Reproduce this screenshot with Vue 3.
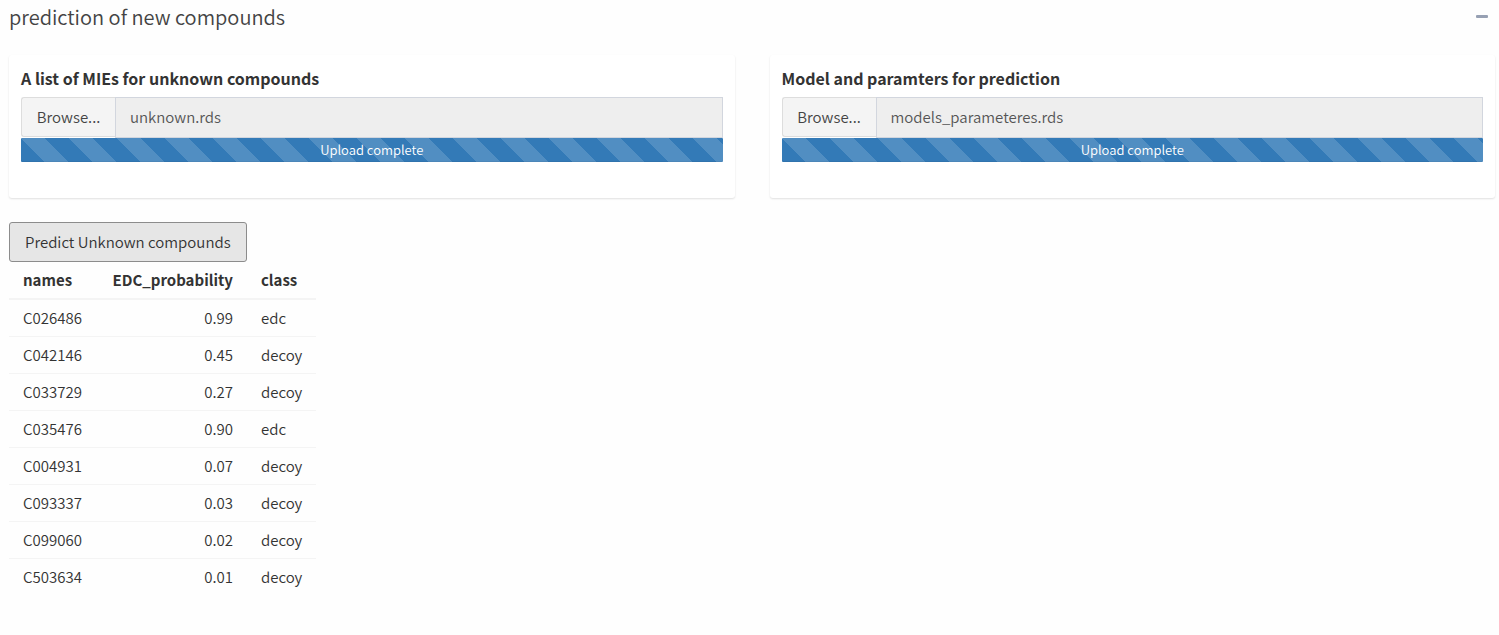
<script setup>
import { ref } from 'vue'

const open = ref(true)

const uploads = [
  { id: 'mies', label: 'A list of MIEs for unknown compounds', file: 'unknown.rds' },
  { id: 'model', label: 'Model and paramters for prediction', file: 'models_parameteres.rds' },
]

const rows = [
  { name: 'C026486', probability: '0.99', group: 'edc' },
  { name: 'C042146', probability: '0.45', group: 'decoy' },
  { name: 'C033729', probability: '0.27', group: 'decoy' },
  { name: 'C035476', probability: '0.90', group: 'edc' },
  { name: 'C004931', probability: '0.07', group: 'decoy' },
  { name: 'C093337', probability: '0.03', group: 'decoy' },
  { name: 'C099060', probability: '0.02', group: 'decoy' },
  { name: 'C503634', probability: '0.01', group: 'decoy' },
]
</script>

<template>
  <main class="box">
    <header class="box-header">
      <h3 class="box-title">prediction of new compounds</h3>
      <button class="collapse" type="button" aria-label="Collapse" :aria-expanded="open" @click="open = !open">
        <svg viewBox="0 0 12 3" width="12" height="3" aria-hidden="true">
          <rect width="12" height="3" rx="1" fill="#97a0b3" />
        </svg>
      </button>
    </header>

    <div v-if="open" class="box-body">
      <div class="uploads">
        <section v-for="u in uploads" :key="u.id" class="card">
          <label class="card-label" :for="u.id">{{ u.label }}</label>
          <div class="file-group">
            <button class="browse" type="button">Browse...</button>
            <input :id="u.id" class="file-name" type="text" readonly :value="u.file" />
          </div>
          <div class="progress" role="progressbar" aria-valuenow="100" aria-label="Upload">Upload complete</div>
        </section>
      </div>

      <button class="predict" type="button">Predict Unknown compounds</button>

      <table class="results">
        <thead>
          <tr>
            <th>names</th>
            <th class="num">EDC_probability</th>
            <th>class</th>
          </tr>
        </thead>
        <tbody>
          <tr v-for="r in rows" :key="r.name">
            <td>{{ r.name }}</td>
            <td class="num">{{ r.probability }}</td>
            <td>{{ r.group }}</td>
          </tr>
        </tbody>
      </table>
    </div>
  </main>
</template>

<style>
body {
  margin: 0;
  background: #fefefe;
}
</style>

<style scoped>
.box,
.box button,
.box input {
  font-family: "Source Sans Pro", "Noto Sans CJK SC", "Noto Sans", sans-serif;
  font-size: 15px;
  font-weight: 350;
  line-height: 20px;
  color: #333;
}

.box * {
  box-sizing: border-box;
}

.box {
  padding: 5px 4px 24px 9px;
}

.box-header {
  display: flex;
  align-items: center;
  justify-content: space-between;
  height: 24px;
}

.box-title {
  margin: 0;
  font-size: 20px;
  line-height: 24px;
  font-weight: 350;
  color: #444;
}

.collapse {
  display: flex;
  padding: 5px 7px 7px;
  border: 0;
  background: transparent;
}

.uploads {
  display: grid;
  grid-template-columns: 1fr 1fr;
  gap: 35px;
  margin-top: 26px;
}

.card {
  padding: 13px 12px 36px;
  border-radius: 3px;
  background: #fff;
  box-shadow: 0 1px 2px rgba(0, 0, 0, 0.12);
}

.card-label {
  display: block;
  margin-bottom: 9px;
  font-size: 16px;
  line-height: 20px;
  font-weight: 700;
}

.file-group {
  display: flex;
  align-items: flex-start;
}

.browse {
  width: 94px;
  height: 40px;
  padding: 0 14px;
  border: 1px solid #ddd;
  border-right: 0;
  border-radius: 3px 0 0 3px;
  background: #f4f4f4;
}

.box .browse {
  color: #444;
}

.file-name {
  flex: 1;
  min-width: 0;
  height: 41px;
  padding: 0 14px 2px;
  border: 1px solid #d2d6de;
  border-radius: 0;
  background: #eee;
}

.box .file-name {
  color: #555;
}

.progress {
  height: 24px;
  border-radius: 1px;
  background-color: #337ab7;
  background-image: linear-gradient(45deg, rgba(255, 255, 255, 0.15) 25%, transparent 25%, transparent 50%, rgba(255, 255, 255, 0.15) 50%, rgba(255, 255, 255, 0.15) 75%, transparent 75%, transparent);
  background-size: 48px 48px;
  box-shadow: inset 0 -1px 0 rgba(0, 0, 0, 0.05);
  color: #fff;
  font-size: 13px;
  line-height: 24px;
  text-align: center;
}

.predict {
  display: block;
  height: 40px;
  margin-top: 24px;
  padding: 0 15px;
  border: 1px solid #8c8c8c;
  border-radius: 3px;
  background: #e6e6e6;
}

.results {
  border-collapse: collapse;
}

.results th,
.results td {
  height: 37px;
  padding: 8px 14px;
  border-top: 1px solid #f4f4f4;
  text-align: left;
}

.results th {
  border-top: 0;
  border-bottom: 2px solid #f4f4f4;
}

.results .num {
  width: 151px;
  text-align: right;
}
</style>
